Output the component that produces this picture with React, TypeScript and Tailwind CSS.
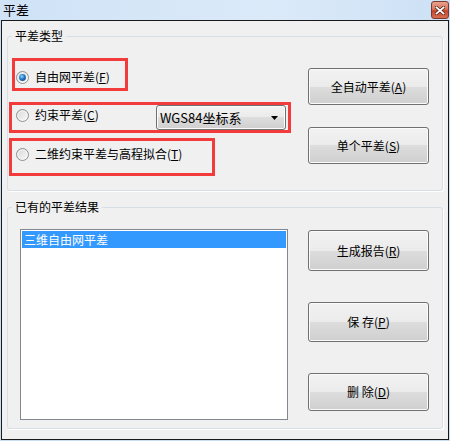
import type { ReactNode } from 'react'

function Radio({ checked }: { checked?: boolean }) {
  return (
    <svg width="13" height="13" viewBox="0 0 13 13" className="shrink-0">
      <defs>
        <linearGradient id="radioBg" x1="0" y1="0" x2="1" y2="1">
          <stop offset="0" stopColor="#d6d6d6" />
          <stop offset="1" stopColor="#fbfbfb" />
        </linearGradient>
        <radialGradient id="radioDot" cx="0.4" cy="0.35" r="0.75">
          <stop offset="0" stopColor="#9ad8ff" />
          <stop offset="0.45" stopColor="#2a86d2" />
          <stop offset="1" stopColor="#0f3f78" />
        </radialGradient>
      </defs>
      <circle cx="6.5" cy="6.5" r="6" fill="url(#radioBg)" stroke="#8e8f8f" />
      <circle cx="6.5" cy="6.5" r="4.6" fill="none" stroke="#f6f6f6" strokeWidth="0.8" />
      {checked && <circle cx="6.5" cy="6.5" r="3.4" fill="url(#radioDot)" />}
    </svg>
  )
}

function Btn({ children, className }: { children: ReactNode; className: string }) {
  return (
    <button
      className={
        'flex w-[121px] items-center justify-center rounded-[3px] border border-[#707070] bg-[linear-gradient(#f2f2f2_0%,#ebebeb_50%,#dddddd_50%,#cfcfcf_100%)] text-[12px] leading-[16px] text-black shadow-[inset_0_0_0_1px_#fbfbfb] ' +
        className
      }
    >
      {children}
    </button>
  )
}

export default function App() {
  return (
    <div className="flex h-[441px] w-[450px] flex-col bg-[#c9ddf1] font-['Noto_Sans_CJK_SC','Microsoft_YaHei',sans-serif] text-[12px] leading-[16px] text-black">
      {/* title bar */}
      <div className="flex h-[20px] shrink-0 items-start justify-between bg-[linear-gradient(90deg,#cfe2f6,#dbeaf9_60%,#cde1f5)] pr-[1px] pt-[1px]">
        <span className="ml-[3px] mt-[1px] text-[13px] leading-[16px]">平差</span>
        <div className="flex h-[18px] w-[18px] items-center justify-center rounded-[3px] border border-[#7a3a30] bg-[linear-gradient(#eaa18c_0%,#d9755b_45%,#c4442b_55%,#d86e50_100%)]">
          <svg width="10" height="9" viewBox="0 0 10 9">
            <path d="M1.5 1.5 L8.5 7.5 M8.5 1.5 L1.5 7.5" stroke="#4a1a12" strokeWidth="3.2" strokeLinecap="square" />
            <path d="M1.5 1.5 L8.5 7.5 M8.5 1.5 L1.5 7.5" stroke="#ffffff" strokeWidth="1.8" strokeLinecap="square" />
          </svg>
        </div>
      </div>

      {/* body */}
      <div className="mx-[1px] mb-[1px] flex flex-1 flex-col border border-[#1a1a1a] bg-[#f0f0f0] pt-[15px]">
        {/* group 1 */}
        <div className="mx-[5px] rounded-[3px] border border-[#d5dfe5] shadow-[1px_1px_0_#ffffff]">
          <div className="-mt-[9px] ml-[4px] w-fit bg-[#f0f0f0] px-[3px]">平差类型</div>
          <div className="flex justify-between pr-[13px]">
            <div className="flex flex-col pb-[14px]">
              <div className="ml-[4px] mt-[14px] flex h-[33px] w-[116px] items-center border-[3px] border-[#f23c3c] pl-[1px] pt-[5px]">
                <Radio checked />
                <span className="ml-[6px]">
                  自由网平差(<u>F</u>)
                </span>
              </div>
              <div className="ml-[1px] mt-[11px] flex h-[31px] w-[282px] items-center border-[3px] border-[#f23c3c] pl-[4px] pr-[2px]">
                <div className="mb-[5px] flex items-center">
                  <Radio />
                  <span className="ml-[6px]">
                    约束平差(<u>C</u>)
                  </span>
                </div>
                <div className="ml-auto flex h-[25px] w-[130px] items-center justify-between rounded-[3px] border border-[#707070] bg-[linear-gradient(#f2f2f2_0%,#ebebeb_50%,#dddddd_50%,#cfcfcf_100%)] pl-[3px] pr-[7px] shadow-[inset_0_0_0_1px_#fbfbfb]">
                  <span className="text-[13px]">WGS84坐标系</span>
                  <svg width="7" height="4" viewBox="0 0 7 4">
                    <path d="M0 0 H7 L3.5 4 Z" fill="#000" />
                  </svg>
                </div>
              </div>
              <div className="ml-[1px] mt-[5px] flex h-[38px] w-[206px] items-center border-[3px] border-[#f23c3c] pl-[4px]">
                <div className="mb-[6px] flex items-center">
                  <Radio />
                  <span className="ml-[6px]">
                    二维约束平差与高程拟合(<u>T</u>)
                  </span>
                </div>
              </div>
            </div>
            <div className="flex flex-col">
              <Btn className="mt-[24px] h-[37px]">
                全自动平差(<u>A</u>)
              </Btn>
              <Btn className="mt-[22px] h-[37px]">
                单个平差(<u>S</u>)
              </Btn>
            </div>
          </div>
        </div>

        {/* group 2 */}
        <div className="mx-[5px] mt-[16px] rounded-[3px] border border-[#d5dfe5] shadow-[1px_1px_0_#ffffff]">
          <div className="-mt-[9px] ml-[4px] w-fit bg-[#f0f0f0] px-[3px]">已有的平差结果</div>
          <div className="flex justify-between pb-[8px] pr-[13px]">
            <div className="ml-[12px] mt-[14px] h-[191px] w-[268px] border border-[#828790] bg-white p-[1px]">
              <div className="h-[17px] bg-[#3399ff] pl-[2px] leading-[17px] text-white">三维自由网平差</div>
            </div>
            <div className="flex flex-col">
              <Btn className="mt-[15px] h-[41px]">
                生成报告(<u>R</u>)
              </Btn>
              <Btn className="mt-[31px] h-[40px]">
                保&nbsp;存(<u>P</u>)
              </Btn>
              <Btn className="mt-[31px] h-[38px]">
                删&nbsp;除(<u>D</u>)
              </Btn>
            </div>
          </div>
        </div>
      </div>
    </div>
  )
}
